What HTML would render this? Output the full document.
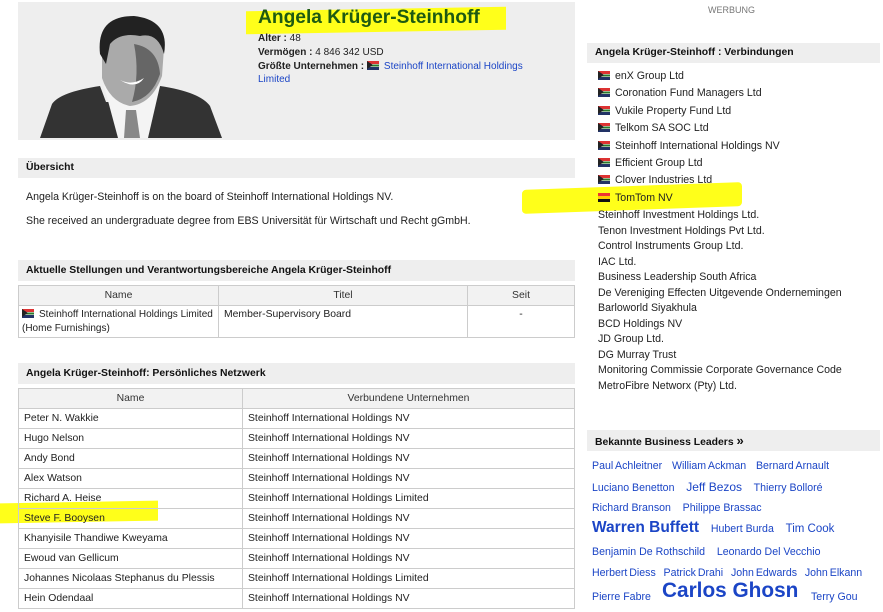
<!DOCTYPE html>
<html><head><meta charset="utf-8"><style>
*{margin:0;padding:0;box-sizing:border-box}
body{width:883px;height:612px;overflow:hidden;background:#fff;font-family:"Liberation Sans",Arial,sans-serif;font-size:10.6px;color:#222;position:relative}
.a{position:absolute;white-space:nowrap}
.bar{position:absolute;background:#eee;font-weight:bold;font-size:10.4px;padding-left:8px;color:#111}
.flag{display:inline-block;width:12px;height:9px;vertical-align:-1px;margin-right:5px;background:linear-gradient(to bottom,#d33 0 33%,#fff 33% 38%,#2a7a2a 38% 62%,#fff 62% 67%,#236 67%);position:relative;overflow:hidden}
.flag:before{content:"";position:absolute;left:0;top:0;border-left:6px solid #222;border-top:4.5px solid transparent;border-bottom:4.5px solid transparent}
.nl{display:inline-block;width:12px;height:9px;vertical-align:-1px;margin-right:5px;background:linear-gradient(to bottom,#e33 0 33%,#fc0 33% 66%,#111 66%)}
table{position:absolute;border-collapse:collapse;font-size:10.4px;table-layout:fixed}
td,th{border:1px solid #ccc;padding:0 5px;font-weight:normal;vertical-align:middle;white-space:nowrap;overflow:hidden}
th{background:#f2f2f2;text-align:center;color:#333}
.hl{position:absolute;background:#ffff1a}
.lnk{color:#1b45c6}
</style></head><body>
<div class="a" style="left:18px;top:2px;width:557px;height:138px;background:#eee"></div>
<svg class="a" style="left:40px;top:14px" width="182" height="124" viewBox="0 0 182 124">
<path d="M0 124 L12 90 Q20 78 60 72 L66 88 L110 88 L120 72 Q160 78 170 92 L182 124Z" fill="#333"/>
<path d="M64 72 L78 124 L108 124 L120 72 Z" fill="#f4f4f4"/>
<path d="M86 96 L96 96 L100 124 L84 124Z" fill="#888"/>
<path d="M62 40 Q58 10 92 4 Q124 6 124 34 L122 62 Q112 90 90 92 Q70 88 62 64 Z" fill="#aaa"/>
<path d="M60 40 Q56 2 94 2 Q130 6 124 40 Q118 18 100 22 Q80 18 70 30 L66 50Z" fill="#222"/>
<path d="M94 30 Q118 34 120 60 Q112 84 92 88 Q100 60 94 30Z" fill="#666"/>
<path d="M80 66 Q92 72 104 64 Q96 76 80 66Z" fill="#fff"/>
</svg>
<div class="hl" style="left:246px;top:9px;width:260px;height:23px;transform:skewY(-1deg)"></div>
<div class="a" style="left:258px;top:7px;font-size:19.2px;font-weight:bold;color:#1e5a12">Angela Krüger-Steinhoff</div>
<div class="a" style="left:258px;top:33px;font-size:10px"><b>Alter :</b> 48</div>
<div class="a" style="left:258px;top:47px;font-size:10px"><b>Vermögen :</b> 4 846 342 USD</div>
<div class="a" style="left:258px;top:61px;font-size:10px"><b>Größte Unternehmen :</b> <span class="flag"></span><span class="lnk">Steinhoff International Holdings</span></div>
<div class="a lnk" style="left:258px;top:74px;font-size:10px">Limited</div>

<div class="bar" style="left:18px;top:158px;width:557px;height:20px;line-height:20px">Übersicht</div>
<div class="a" style="left:26px;top:191px">Angela Krüger-Steinhoff is on the board of Steinhoff International Holdings NV.</div>
<div class="a" style="left:26px;top:215px">She received an undergraduate degree from EBS Universität für Wirtschaft und Recht gGmbH.</div>

<div class="bar" style="left:18px;top:260px;width:557px;height:21px;line-height:21px">Aktuelle Stellungen und Verantwortungsbereiche Angela Krüger-Steinhoff</div>
<table style="left:18px;top:285px;width:557px">
<tr style="height:20px"><th style="width:200px">Name</th><th style="width:249px">Titel</th><th>Seit</th></tr>
<tr style="height:32px"><td style="line-height:14px;padding:0 3px;font-size:10px"><span class="flag"></span>Steinhoff International Holdings Limited<br>(Home Furnishings)</td><td style="vertical-align:top;padding-top:3px">Member-Supervisory Board</td><td style="text-align:center;vertical-align:top;padding-top:3px">-</td></tr>
</table>

<div class="bar" style="left:18px;top:363px;width:557px;height:21px;line-height:21px">Angela Krüger-Steinhoff: Persönliches Netzwerk</div>
<div class="hl" style="left:0;top:502px;width:158px;height:20px;transform:skewY(-1deg)"></div>
<table style="left:18px;top:388px;width:557px">
<tr style="height:20px"><th style="width:224px">Name</th><th>Verbundene Unternehmen</th></tr>
<tr style="height:20px"><td>Peter N. Wakkie</td><td>Steinhoff International Holdings NV</td></tr>
<tr style="height:20px"><td>Hugo Nelson</td><td>Steinhoff International Holdings NV</td></tr>
<tr style="height:20px"><td>Andy Bond</td><td>Steinhoff International Holdings NV</td></tr>
<tr style="height:20px"><td>Alex Watson</td><td>Steinhoff International Holdings NV</td></tr>
<tr style="height:20px"><td>Richard A. Heise</td><td>Steinhoff International Holdings Limited</td></tr>
<tr style="height:20px"><td>Steve F. Booysen</td><td>Steinhoff International Holdings NV</td></tr>
<tr style="height:20px"><td>Khanyisile Thandiwe Kweyama</td><td>Steinhoff International Holdings NV</td></tr>
<tr style="height:20px"><td>Ewoud van Gellicum</td><td>Steinhoff International Holdings NV</td></tr>
<tr style="height:20px"><td>Johannes Nicolaas Stephanus du Plessis</td><td>Steinhoff International Holdings Limited</td></tr>
<tr style="height:20px"><td>Hein Odendaal</td><td>Steinhoff International Holdings NV</td></tr>
</table>

<div class="a" style="left:708px;top:5px;font-size:9px;color:#777">WERBUNG</div>
<div class="bar" style="left:587px;top:43px;width:293px;height:20px;line-height:20px">Angela Krüger-Steinhoff : Verbindungen</div>
<div class="hl" style="left:522px;top:186px;width:220px;height:24px;border-radius:4px;transform:skewY(-2deg)"></div>
<div class="a" style="left:598px;top:68px;line-height:17.4px"><span class="flag"></span>enX Group Ltd<br><span class="flag"></span>Coronation Fund Managers Ltd<br><span class="flag"></span>Vukile Property Fund Ltd<br><span class="flag"></span>Telkom SA SOC Ltd<br><span class="flag"></span>Steinhoff International Holdings NV<br><span class="flag"></span>Efficient Group Ltd<br><span class="flag"></span>Clover Industries Ltd<br><span class="nl"></span>TomTom NV</div>
<div class="a" style="left:598px;top:208px;line-height:15.5px">Steinhoff Investment Holdings Ltd.<br>Tenon Investment Holdings Pvt Ltd.<br>Control Instruments Group Ltd.<br>IAC Ltd.<br>Business Leadership South Africa<br>De Vereniging Effecten Uitgevende Ondernemingen<br>Barloworld Siyakhula<br>BCD Holdings NV<br>JD Group Ltd.<br>DG Murray Trust<br>Monitoring Commissie Corporate Governance Code<br>MetroFibre Networx (Pty) Ltd.</div>

<div class="bar" style="left:587px;top:430px;width:293px;height:21px;line-height:21px">Bekannte Business Leaders <span style="font-size:13px">»</span></div>
<div class="a lnk" style="left:592px;top:460px;word-spacing:-0.5px">Paul Achleitner &nbsp;&nbsp; William Ackman &nbsp;&nbsp; Bernard Arnault</div>
<div class="a lnk" style="left:592px;top:480px"><span>Luciano Benetton</span> &nbsp;&nbsp; <span style="font-size:12px">Jeff Bezos</span> &nbsp;&nbsp; Thierry Bolloré</div>
<div class="a lnk" style="left:592px;top:502px">Richard Branson &nbsp;&nbsp; Philippe Brassac</div>
<div class="a lnk" style="left:592px;top:519px"><b style="font-size:15.5px">Warren Buffett</b> &nbsp;&nbsp; Hubert Burda &nbsp;&nbsp; <span style="font-size:11.5px">Tim Cook</span></div>
<div class="a lnk" style="left:592px;top:546px">Benjamin De Rothschild &nbsp;&nbsp; Leonardo Del Vecchio</div>
<div class="a lnk" style="left:592px;top:567px;word-spacing:-1px">Herbert Diess &nbsp;&nbsp; Patrick Drahi &nbsp;&nbsp; John Edwards &nbsp;&nbsp; John Elkann</div>
<div class="a lnk" style="left:592px;top:591px">Pierre Fabre</div>
<div class="a lnk" style="left:662px;top:579px;font-size:20.8px;font-weight:bold">Carlos Ghosn</div>
<div class="a lnk" style="left:811px;top:591px">Terry Gou</div>
</body></html>
